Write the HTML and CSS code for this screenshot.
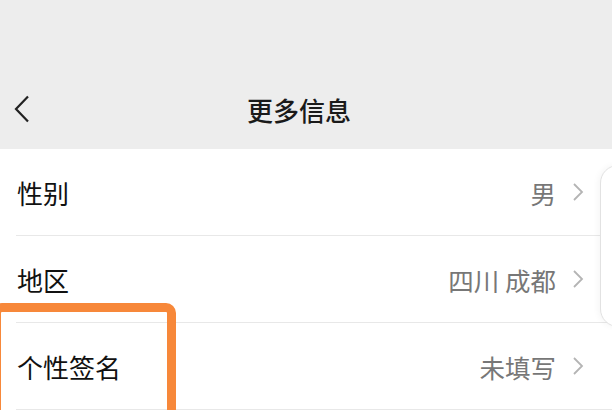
FILE: index.html
```html
<!DOCTYPE html>
<html lang="zh-CN">
<head>
    <meta charset="UTF-8">
    <meta name="viewport" content="width=device-width, initial-scale=1.0">
    <title>更多信息</title>
    <link rel="stylesheet" href="styles.css">
</head>
<body>
    <div class="page">
        <div class="header">
            <div class="navbar">
                <span class="back">
                    <svg width="18" height="28" viewBox="0 0 18 28"><path d="M15 1.5 L3 14 L15 26.5" fill="none" stroke="#222" stroke-width="2.2" stroke-linejoin="miter"/></svg>
                </span>
                <h1 class="title">更多信息</h1>
            </div>
        </div>

        <ul class="list">
            <li class="row">
                <span class="label">性别</span>
                <span class="value">男</span>
                <svg class="arrow" width="12" height="20" viewBox="0 0 12 20"><path d="M2 2 L10 10 L2 18" fill="none" stroke="#b4b4b4" stroke-width="1.8"/></svg>
            </li>
            <li class="row">
                <span class="label">地区</span>
                <span class="value">四川 成都</span>
                <svg class="arrow" width="12" height="20" viewBox="0 0 12 20"><path d="M2 2 L10 10 L2 18" fill="none" stroke="#b4b4b4" stroke-width="1.8"/></svg>
            </li>
            <li class="row">
                <span class="label">个性签名</span>
                <span class="value">未填写</span>
                <svg class="arrow" width="12" height="20" viewBox="0 0 12 20"><path d="M2 2 L10 10 L2 18" fill="none" stroke="#b4b4b4" stroke-width="1.8"/></svg>
            </li>
        </ul>

        <!-- edge of a panel lying over the list -->
        <div class="side-card"></div>
        <!-- orange highlight round the last label -->
        <div class="mark"></div>
    </div>
</body>
</html>
```

FILE: styles.css
```css
body {
    margin: 0;
    padding: 0;
    font-family: "Noto Sans CJK SC", "Noto Sans", sans-serif;
    background-color: #fff;
    color: #111;
}
.page {
    position: relative;
    width: 612px;
    height: 410px;
    overflow: hidden;
}
.header {
    background-color: #ededed;
    height: 149px;
    display: flex;
    flex-direction: column;
    justify-content: flex-end;
}
.navbar {
    height: 76px;
    display: flex;
    align-items: center;
    justify-content: center;
    position: relative;
    padding-bottom: 2px;
}
.back {
    position: absolute;
    left: 13px;
    top: 24px;
    display: flex;
}
.title {
    margin: 0;
    font-size: 26px;
    font-weight: 500;
    color: #1a1a1a;
    margin-left: -14px;
}
.list {
    list-style: none;
    margin: 0;
    padding: 0 0 0 16px;
}
.row {
    height: 86px;
    display: flex;
    align-items: center;
    border-bottom: 1px solid #e8e8e8;
    padding-right: 28px;
}
.label {
    flex: 1;
    font-size: 26px;
    padding-left: 1px;
}
.value {
    font-size: 25.5px;
    color: #777;
    margin-right: 16px;
}
.side-card {
    position: absolute;
    left: 600px;
    top: 165px;
    width: 60px;
    height: 160px;
    border: 1px solid #e2e2e2;
    border-radius: 18px;
    box-shadow: -2px 0 6px rgba(0, 0, 0, 0.04);
    background: #fff;
}
.mark {
    position: absolute;
    left: -8px;
    top: 303px;
    width: 166px;
    height: 130px;
    border: 9px solid #f7883a;
    border-radius: 10px;
}
```
